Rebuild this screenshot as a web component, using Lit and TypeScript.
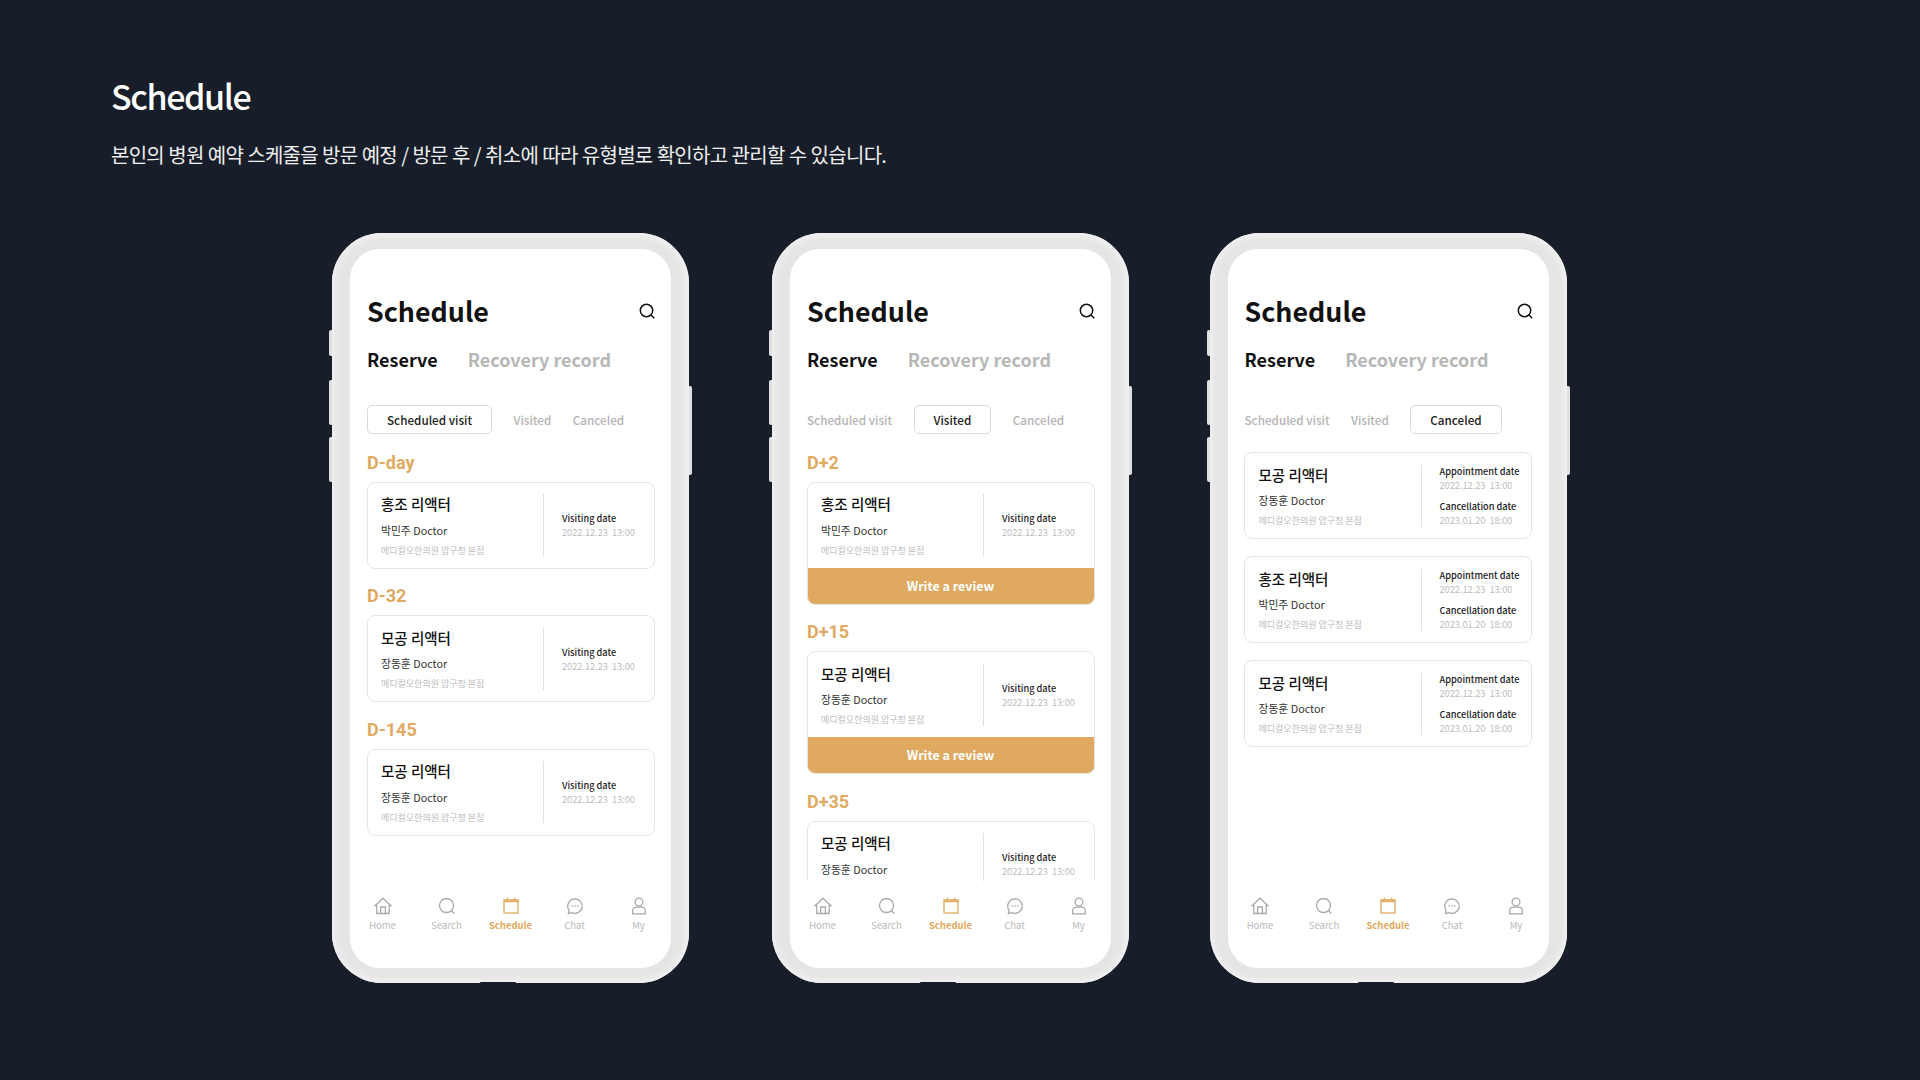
import { LitElement, html, css, svg } from "lit";
import { customElement } from "lit/decorators.js";

type Booking = { name: string; doctor: string; head?: string; review?: boolean; canceled?: boolean };

const HONG = { name: "홍조 리액터", doctor: "박민주 Doctor" };
const MO = { name: "모공 리액터", doctor: "장동훈 Doctor" };

const PHONES: { active: number; spread: string; items: Booking[] }[] = [
  {
    active: 0,
    spread: "",
    items: [
      { ...HONG, head: "D-day" },
      { ...MO, head: "D-32" },
      { ...MO, head: "D-145" },
    ],
  },
  {
    active: 1,
    spread: "",
    items: [
      { ...HONG, head: "D+2", review: true },
      { ...MO, head: "D+15", review: true },
      { ...MO, head: "D+35", review: true },
    ],
  },
  {
    active: 2,
    spread: "flat",
    items: [
      { ...MO, canceled: true },
      { ...HONG, canceled: true },
      { ...MO, canceled: true },
    ],
  },
];

const CHIPS = ["Scheduled visit", "Visited", "Canceled"];

const ICONS = [
  svg`<path d="M1.5 10.2 10 2.2l8.500 8"/><path d="M3.800 8.500V17.500H16.200V8.500"/><path d="M7.600 17.500V11H12.400V17.500"/>`,
  svg`<circle cx="9.500" cy="9.500" r="7"/><path d="m14.500 14.500 2.800 3"/>`,
  svg`<rect x="3" y="3.800" width="14" height="13.200"/><path d="M3 5.200H17" stroke-width="2"/><path d="M6.500 1.800V4M13.500 1.800V4"/>`,
  svg`<path d="M10 2.800a7.300 7.300 0 1 1-3.200 13.900L3.400 17.600l.7-3.300A7.300 7.300 0 0 1 10 2.800Z"/><path d="M7 10h.4M9.800 10h.4M12.600 10h.4" stroke-linecap="round"/>`,
  svg`<circle cx="10" cy="6" r="3.900"/><path d="M3.700 17.800v-3.100a3.500 3.500 0 0 1 3.500-3.500h5.600a3.500 3.500 0 0 1 3.500 3.500v3.100Z"/>`,
];
const NAV = ["Home", "Search", "Schedule", "Chat", "My"];

@customElement("app-root")
export class AppRoot extends LitElement {
  static styles = css`
    :host {
      display: block;
      width: 1920px;
      height: 1080px;
      overflow: hidden;
      background: #171e29;
      font-family: "Noto Sans CJK KR", "Noto Sans", sans-serif;
    }
    .intro {
      padding: 70.500px 0 0 111px;
      height: 233px;
      box-sizing: border-box;
      color: #fff;
    }
    .intro h1 {
      margin: 0;
      height: 50px;
      line-height: 50px;
      font-size: 34px;
      font-weight: 500;
      letter-spacing: -1.400px;
    }
    .intro p {
      margin: 19px 0 0;
      height: 30px;
      line-height: 30px;
      font-size: 20px;
      font-weight: 400;
      color: #eee;
      letter-spacing: -0.720px;
      word-spacing: 0.400px;
    }
    .row {
      display: flex;
      padding-left: 332px;
    }
    .phone {
      position: relative;
      width: 357px;
      height: 750px;
      box-sizing: border-box;
      padding: 16px 18px 15px;
      border-radius: 50px;
      background: #e5e5e5;
      box-shadow: inset 0 0 5px 4px #f0f0f0, inset 5px 0 3px -1px #dcdcdc;
    }
    .phone.second { margin-left: 83px; }
    .phone.third { margin-left: 80.500px; }
    .key {
      position: absolute;
      width: 3px;
      background: #e0e0e0;
    }
    .k1 { left: -3px; top: 97px; height: 26px; border-radius: 2px 0 0 2px; }
    .k2 { left: -3px; top: 147px; height: 45px; border-radius: 2px 0 0 2px; }
    .k3 { left: -3px; top: 204px; height: 45px; border-radius: 2px 0 0 2px; }
    .k4 { right: -3px; top: 153px; height: 89px; border-radius: 0 2px 2px 0; }
    .notch {
      position: absolute;
      left: 148px;
      bottom: 0;
      width: 36px;
      height: 1.500px;
      border-radius: 2px 2px 0 0;
      background: #171e29;
    }
    .screen {
      height: 719px;
      background: #fff;
      border-radius: 30px;
      overflow: hidden;
      display: flex;
      flex-direction: column;
    }
    .top {
      padding: 43px 17px 0;
    }
    .titlebar {
      display: flex;
      justify-content: space-between;
      align-items: center;
      height: 38px;
    }
    .titlebar h2 {
      margin: 0 0 2px;
      font-size: 26.800px;
      font-weight: 700;
      color: #111;
    }
    .titlebar svg {
      display: block;
      width: 18px;
      height: 18px;
      margin-right: -2px;
      fill: none;
      stroke: #111;
      stroke-width: 1.500;
    }
    .tabs {
      display: flex;
      gap: 30px;
      margin-top: 17px;
      height: 24px;
      line-height: 24px;
      font-size: 18px;
      font-weight: 700;
      color: #b7b7b7;
    }
    .tabs .on { color: #111; }
    .chips {
      display: flex;
      align-items: center;
      gap: 21.500px;
      margin-top: 34px;
      height: 29px;
      font-size: 11.700px;
      font-weight: 500;
      color: #b4b4b4;
    }
    .chip.on {
      box-sizing: border-box;
      height: 29px;
      line-height: 27px;
      padding: 0 19px;
      border: 1px solid #d9d9d9;
      border-radius: 5px;
      color: #222;
    }
    .body {
      flex: 1;
      min-height: 0;
      overflow: hidden;
      padding: 15.500px 16.500px 0;
    }
    .body.flat { padding-top: 18px; }
    .group { margin-bottom: 14.500px; }
    .body.review .group { margin-bottom: 14.500px; }
    .body.flat .group { margin-bottom: 17px; }
    .head {
      height: 24px;
      line-height: 26px;
      margin-bottom: 8px;
      font-family: Roboto, "Noto Sans CJK KR", sans-serif;
      font-size: 18px;
      font-weight: 700;
      color: #e0aa61;
      padding-left: 0.500px;
    }
    .card {
      border: 1px solid #e6e6e6;
      border-radius: 8px;
      overflow: hidden;
    }
    .info {
      box-sizing: border-box;
      height: 85px;
      display: flex;
      align-items: center;
    }
    .who {
      box-sizing: border-box;
      width: 175.500px;
      height: 85px;
      padding: 10.500px 0 0 13.500px;
    }
    .who .name {
      height: 21px;
      line-height: 21px;
      font-size: 14.500px;
      font-weight: 500;
      color: #111;
    }
    .who .doc {
      height: 18px;
      line-height: 18px;
      margin-top: 6.500px;
      font-size: 10.800px;
      color: #333;
    }
    .who .loc {
      height: 14px;
      line-height: 14px;
      margin-top: 5px;
      font-size: 9px;
      color: #bdbdbd;
    }
    .rule {
      width: 1px;
      height: 62px;
      background: #e2e2e2;
    }
    .when {
      padding-left: 18px;
    }
    .when .lbl {
      height: 14px;
      line-height: 14px;
      font-size: 9.200px;
      font-weight: 500;
      color: #222;
    }
    .when .val {
      height: 14px;
      line-height: 14px;
      font-size: 9.200px;
      color: #bdbdbd;
      white-space: pre;
    }
    .when .val.gap { margin-bottom: 7px; }
    .cta {
      margin: 0 -1px -1px;
      height: 37px;
      line-height: 36.500px;
      text-align: center;
      font-size: 12.500px;
      font-weight: 700;
      color: #fff;
      background: #dfa95f;
    }
    nav {
      flex: none;
      height: 87px;
      box-sizing: border-box;
      padding-top: 15px;
      display: grid;
      grid-template-columns: repeat(5, 64px);
      justify-content: center;
    }
    .tab {
      display: flex;
      flex-direction: column;
      align-items: center;
      font-size: 9.500px;
      color: #b9b9b9;
      line-height: 14px;
    }
    .tab svg {
      display: block;
      width: 20px;
      height: 20px;
      margin-bottom: 2px;
      fill: none;
      stroke: #a9a9a9;
      stroke-width: 1.300;
    }
    .tab.on {
      color: #e0aa61;
      font-weight: 700;
    }
    .tab.on svg { stroke: #e0aa61; }
  `;

  private card(b: Booking) {
    return html`<div class="group">
      ${b.head ? html`<div class="head">${b.head}</div>` : ""}
      <div class="card">
        <div class="info">
          <div class="who">
            <div class="name">${b.name}</div>
            <div class="doc">${b.doctor}</div>
            <div class="loc">메디컬오한의원 압구정 본점</div>
          </div>
          <div class="rule"></div>
          ${b.canceled
            ? html`<div class="when">
                <div class="lbl">Appointment date</div>
                <div class="val gap">2022.12.23  13:00</div>
                <div class="lbl">Cancellation date</div>
                <div class="val">2023.01.20  18:00</div>
              </div>`
            : html`<div class="when">
                <div class="lbl">Visiting date</div>
                <div class="val">2022.12.23  13:00</div>
              </div>`}
        </div>
        ${b.review ? html`<div class="cta">Write a review</div>` : ""}
      </div>
    </div>`;
  }

  private phone(p: (typeof PHONES)[number], i: number) {
    const cls = ["", "second", "third"][i];
    const bodyCls = p.spread || (p.items[0].review ? "review" : "");
    return html`<div class="phone ${cls}">
      <i class="key k1"></i><i class="key k2"></i><i class="key k3"></i><i class="key k4"></i>
      <i class="notch"></i>
      <div class="screen">
        <div class="top">
          <div class="titlebar">
            <h2>Schedule</h2>
            <svg viewBox="0 0 18 18"><circle cx="8.500" cy="8.500" r="6.200"/><path d="m13 13 3.200 3.200"/></svg>
          </div>
          <div class="tabs"><span class="on">Reserve</span><span>Recovery record</span></div>
          <div class="chips">
            ${CHIPS.map((c, n) => html`<span class="chip ${n === p.active ? "on" : ""}">${c}</span>`)}
          </div>
        </div>
        <div class="body ${bodyCls}">${p.items.map((b) => this.card(b))}</div>
        <nav>
          ${NAV.map(
            (n, k) => html`<div class="tab ${k === 2 ? "on" : ""}">
              <svg viewBox="0 0 20 20">${ICONS[k]}</svg>${n}
            </div>`
          )}
        </nav>
      </div>
    </div>`;
  }

  render() {
    return html`
      <header class="intro">
        <h1>Schedule</h1>
        <p>본인의 병원 예약 스케줄을 방문 예정 / 방문 후 / 취소에 따라 유형별로 확인하고 관리할 수 있습니다.</p>
      </header>
      <div class="row">${PHONES.map((p, i) => this.phone(p, i))}</div>
    `;
  }
}
